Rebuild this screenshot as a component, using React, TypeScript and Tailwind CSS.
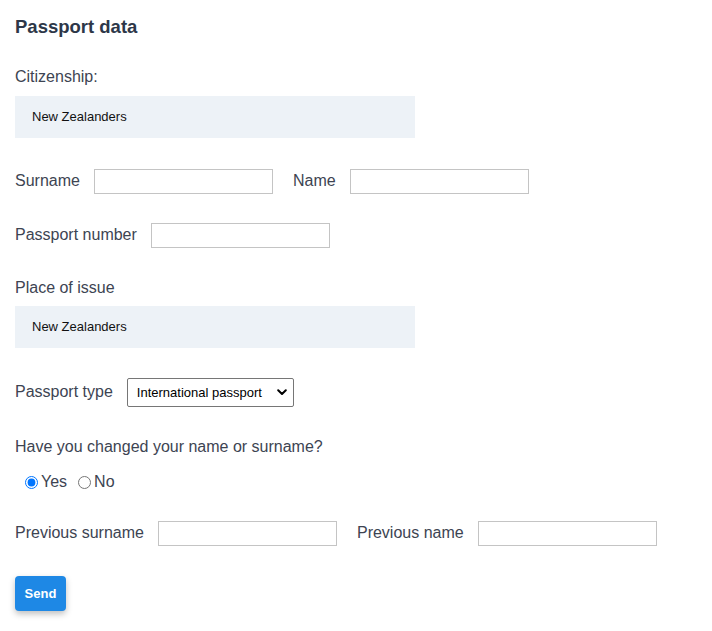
import React from "react";

function TextInput({ className = "" }: { className?: string }) {
  return (
    <input
      type="text"
      className={`h-[25px] w-[179px] border border-[#c4c4c4] bg-white px-1 text-[13px] outline-none ${className}`}
    />
  );
}

export default function App() {
  const [changed, setChanged] = React.useState("yes");
  return (
    <div className="min-h-[631px] w-[712px] bg-white p-[15px] font-['Liberation_Sans',Arial,sans-serif] text-[16px] text-[#3d4452]">
      <h2 className="m-0 pt-[1px] text-[18.5px] font-bold leading-[22px] text-[#2d3748]">Passport data</h2>

      <div className="mt-[29px] leading-[19px]">Citizenship:</div>
      <div className="mt-[10px] flex h-[42px] w-[400px] items-center bg-[#edf2f7] pl-[17px] text-[13px] text-[#111]">
        New Zealanders
      </div>

      <div className="mt-[31px] flex h-[25px] items-center">
        <span className="-mt-[2px]">Surname</span>
        <TextInput className="ml-[14px]" />
        <span className="-mt-[2px] ml-[20px]">Name</span>
        <TextInput className="ml-[14px]" />
      </div>

      <div className="mt-[29px] flex h-[25px] items-center">
        <span className="-mt-[2px]">Passport number</span>
        <TextInput className="ml-[14px]" />
      </div>

      <div className="mt-[30px] leading-[19px]">Place of issue</div>
      <div className="mt-[9px] flex h-[42px] w-[400px] items-center bg-[#edf2f7] pl-[17px] text-[13px] text-[#111]">
        New Zealanders
      </div>

      <div className="mt-[30px] flex h-[29px] items-center">
        <span className="-mt-[2px]">Passport type</span>
        <div className="relative ml-[14px]">
          <select className="h-[29px] w-[167px] appearance-none rounded-[2px] border border-[#767676] bg-white pl-[9px] text-[13px] text-black outline-none">
            <option>International passport</option>
            <option>Internal passport</option>
          </select>
          <svg
            className="pointer-events-none absolute right-[7px] top-[11px]"
            width="10"
            height="7"
            viewBox="0 0 10 7"
          >
            <path d="M1.2 1.2 L5 5 L8.8 1.2" fill="none" stroke="#000" strokeWidth="2" strokeLinecap="round" strokeLinejoin="round" />
          </svg>
        </div>
      </div>

      <div className="mt-[30px] leading-[19px]">Have you changed your name or surname?</div>

      <div className="mt-[16px] flex h-[20px] items-center pl-[10px]">
        <label className="flex items-center">
          <input
            type="radio"
            name="changed"
            checked={changed === "yes"}
            onChange={() => setChanged("yes")}
            className="m-0 h-[13px] w-[13px] accent-[#0075ff]"
          />
          <span className="ml-[3px]">Yes</span>
        </label>
        <label className="ml-[11px] flex items-center">
          <input
            type="radio"
            name="changed"
            checked={changed === "no"}
            onChange={() => setChanged("no")}
            className="m-0 h-[13px] w-[13px] accent-[#0075ff]"
          />
          <span className="ml-[3px]">No</span>
        </label>
      </div>

      <div className="mt-[29px] flex h-[25px] items-center">
        <span className="-mt-[2px]">Previous surname</span>
        <TextInput className="ml-[14px]" />
        <span className="-mt-[2px] ml-[20px]">Previous name</span>
        <TextInput className="ml-[14px]" />
      </div>

      <button className="mt-[30px] h-[35px] w-[51px] rounded-[4px] bg-[#1e88e5] text-[13px] font-bold text-white shadow-[0_3px_6px_rgba(0,0,0,0.25)]">
        Send
      </button>
    </div>
  );
}
